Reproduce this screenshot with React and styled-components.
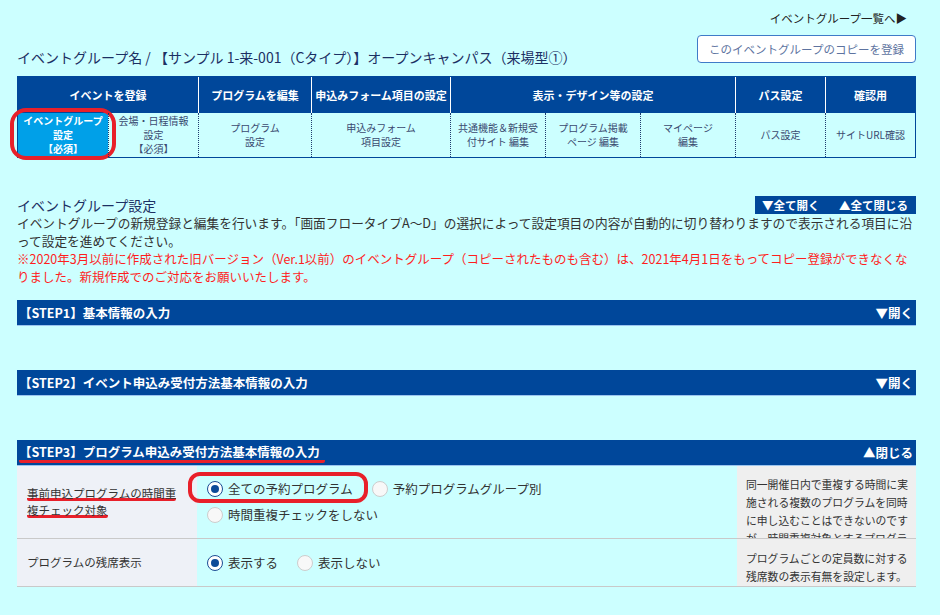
import styled, { createGlobalStyle } from 'styled-components';

const GlobalStyle = createGlobalStyle`
  body {
    margin: 0;
    background: #ccffff;
    font-family: "Noto Sans CJK JP", "Noto Sans", sans-serif;
    color: #333;
  }
`;

const Page = styled.div`
  width: 899px;
  padding: 10px 24px 30px 17px;
`;

const TopLink = styled.div`
  text-align: right;
  font-size: 11.5px;
  line-height: 16px;
  color: #222;
  padding-right: 9px;
`;

const TitleRow = styled.div`
  display: flex;
  justify-content: space-between;
  align-items: flex-end;
  margin: 9px 0 7px;
`;

const Title = styled.h1`
  margin: 0;
  font-size: 14px;
  font-weight: normal;
  line-height: 24px;
  color: #1c3064;
`;

const CopyButton = styled.button`
  width: 219px;
  height: 28px;
  margin-bottom: 6px;
  padding: 0;
  border: 1px solid #3f7bc8;
  border-radius: 4px;
  background: #fff;
  color: #5d73a0;
  font-family: inherit;
  font-size: 11.5px;
`;

const NavGrid = styled.div`
  display: grid;
  grid-template-columns: 90px 90px 113px 139px 95px 95px 95px 90px 90px;
  grid-template-rows: 36px 44px;
  border: 1px solid #00479a;
`;

const NavHead = styled.div`
  grid-column: span ${props => props.$span || 1};
  display: flex;
  align-items: center;
  justify-content: center;
  background: #00479a;
  color: #fff;
  font-size: 11px;
  font-weight: bold;
  border-left: ${props => (props.$first ? 'none' : '1px solid #fff')};
`;

const NavCell = styled.div`
  position: relative;
  display: flex;
  align-items: center;
  justify-content: center;
  text-align: center;
  font-size: 10px;
  line-height: 14px;
  color: ${props => (props.$active ? '#fff' : '#3a4a70')};
  font-weight: ${props => (props.$active ? 'bold' : 'normal')};
  background: ${props => (props.$active ? '#00a0e8' : 'transparent')};
  border-left: ${props => (props.$first ? 'none' : '1px dotted #1e3a6e')};
`;

const NavRing = styled.span`
  position: absolute;
  left: -8px;
  right: -8px;
  top: -5px;
  bottom: -3px;
  border: 4px solid #e8202a;
  border-radius: 16px;
  pointer-events: none;
`;

const SectionHead = styled.div`
  display: flex;
  justify-content: space-between;
  align-items: flex-end;
  margin-top: 38px;
`;

const SectionTitle = styled.h2`
  margin: 0;
  font-size: 14px;
  font-weight: normal;
  line-height: 18px;
  color: #1c3064;
`;

const ToggleAll = styled.div`
  display: flex;
  justify-content: space-between;
  width: 161px;
  box-sizing: border-box;
  height: 18px;
  padding: 0 8px 0 7px;
  background: #00479a;
  color: #fff;
  font-size: 11.5px;
  font-weight: bold;
  line-height: 18px;
  white-space: nowrap;
`;

const Desc = styled.p`
  margin: 0;
  font-size: ${props => (props.$alert ? 12.5 : 12.7)}px;
  line-height: 18px;
  color: ${props => (props.$alert ? '#ff1e1e' : '#333')};
`;

const Step = styled.section`
  margin-top: ${props => props.$gap}px;
`;

const StepBar = styled.div`
  display: flex;
  justify-content: space-between;
  align-items: center;
  height: 25px;
  padding: 0 3px 0 2px;
  background: #00479a;
  color: #fff;
  font-size: 12.5px;
  font-weight: bold;
  border-bottom: 1px solid #9cc4ee;
`;

const Marked = styled.span`
  padding: 0 ${props => props.$right || 0}px ${props => props.$below || 0}px 0;
  background: linear-gradient(#e8202a, #e8202a) no-repeat left bottom / 100% 3px;
  -webkit-box-decoration-break: clone;
  box-decoration-break: clone;
  border-radius: 2px;
`;

const FormRow = styled.div`
  display: grid;
  grid-template-columns: 180px 540px 179px;
  height: ${props => props.$h}px;
  border-bottom: 1px solid #c9c9c9;
`;

const LabelCell = styled.div`
  display: flex;
  align-items: center;
  padding: 0 15px 0 10px;
  background: #eef1f7;
  font-size: 11.5px;
  line-height: 17px;
  color: #333;
`;

const FieldCell = styled.div`
  display: flex;
  flex-direction: column;
  justify-content: center;
  padding-left: 10px;
`;

const HelpCell = styled.div`
  padding: ${props => props.$top || 9}px 8px 0 9px;
  background: #efefef;
  font-size: 10.8px;
  line-height: 18px;
  color: #333;
  overflow: hidden;
`;

const RadioLine = styled.div`
  display: flex;
  align-items: center;
  height: 26px;
`;

const RadioOption = styled.label`
  position: relative;
  display: inline-flex;
  align-items: center;
  gap: 5px;
  margin-right: 19px;
  font-size: 12.5px;
  line-height: 18px;
  color: #333;
`;

const RadioMark = styled.span`
  width: 16px;
  height: 16px;
  box-sizing: border-box;
  border-radius: 50%;
  border: 1px solid ${props => (props.$checked ? '#1b4d94' : '#cdcdcd')};
  background: ${props => (props.$checked ? '#fff' : '#f8f8f8')};
  display: flex;
  align-items: center;
  justify-content: center;
  &::after {
    content: '';
    width: 8px;
    height: 8px;
    border-radius: 50%;
    background: #0d4a98;
    display: ${props => (props.$checked ? 'block' : 'none')};
  }
`;

const OptionRing = styled.span`
  position: absolute;
  left: -19px;
  right: -15px;
  top: -8px;
  bottom: -5px;
  border: 4px solid #e8202a;
  border-radius: 12px;
  pointer-events: none;
`;

const navHeads = [
  { label: 'イベントを登録', span: 2 },
  { label: 'プログラムを編集' },
  { label: '申込みフォーム項目の設定' },
  { label: '表示・デザイン等の設定', span: 3 },
  { label: 'パス設定' },
  { label: '確認用' },
];

const navCells = [
  ['イベントグループ', '設定', '【必須】'],
  ['会場・日程情報', '設定', '【必須】'],
  ['プログラム', '設定'],
  ['申込みフォーム', '項目設定'],
  ['共通機能＆新規受', '付サイト 編集'],
  ['プログラム掲載', 'ページ 編集'],
  ['マイページ', '編集'],
  ['パス設定'],
  ['サイトURL確認'],
];

function Radio({ checked, children, ring }) {
  return (
    <RadioOption>
      <RadioMark $checked={checked} />
      {children}
      {ring && <OptionRing />}
    </RadioOption>
  );
}

export default function App() {
  return (
    <>
      <GlobalStyle />
      <Page>
        <TopLink>イベントグループ一覧へ▶</TopLink>
        <TitleRow>
          <Title>イベントグループ名 / 【サンプル 1-来-001（Cタイプ）】オープンキャンパス（来場型①）</Title>
          <CopyButton>このイベントグループのコピーを登録</CopyButton>
        </TitleRow>

        <NavGrid>
          {navHeads.map((h, i) => (
            <NavHead key={h.label} $span={h.span} $first={i === 0}>
              {h.label}
            </NavHead>
          ))}
          {navCells.map((lines, i) => (
            <NavCell key={i} $first={i === 0} $active={i === 0}>
              <div>
                {lines.map(l => (
                  <div key={l}>{l}</div>
                ))}
              </div>
              {i === 0 && <NavRing />}
            </NavCell>
          ))}
        </NavGrid>

        <SectionHead>
          <SectionTitle>イベントグループ設定</SectionTitle>
          <ToggleAll>
            <span>▼全て開く</span>
            <span>▲全て閉じる</span>
          </ToggleAll>
        </SectionHead>
        <Desc>
          イベントグループの新規登録と編集を行います。「画面フロータイプA～D」の選択によって設定項目の内容が自動的に切り替わりますので表示される項目に沿って設定を進めてください。
        </Desc>
        <Desc $alert>
          ※2020年3月以前に作成された旧バージョン（Ver.1以前）のイベントグループ（コピーされたものも含む）は、2021年4月1日をもってコピー登録ができなくなりました。新規作成でのご対応をお願いいたします。
        </Desc>

        <Step $gap={14}>
          <StepBar>
            <span>【STEP1】基本情報の入力</span>
            <span>▼開く</span>
          </StepBar>
        </Step>

        <Step $gap={44}>
          <StepBar>
            <span>【STEP2】イベント申込み受付方法基本情報の入力</span>
            <span>▼開く</span>
          </StepBar>
        </Step>

        <Step $gap={44}>
          <StepBar>
            <Marked $right={5} $below={2}>【STEP3】プログラム申込み受付方法基本情報の入力</Marked>
            <span>▲閉じる</span>
          </StepBar>
          <FormRow $h={72}>
            <LabelCell>
              <div>
                <Marked>事前申込プログラムの時間重複チェック対象</Marked>
              </div>
            </LabelCell>
            <FieldCell>
              <RadioLine>
                <Radio checked ring>全ての予約プログラム</Radio>
                <Radio>予約プログラムグループ別</Radio>
              </RadioLine>
              <RadioLine>
                <Radio>時間重複チェックをしない</Radio>
              </RadioLine>
            </FieldCell>
            <HelpCell>
              同一開催日内で重複する時間に実施される複数のプログラムを同時に申し込むことはできないのですが、時間重複対象とするプログラムを選択してください。
            </HelpCell>
          </FormRow>
          <FormRow $h={47}>
            <LabelCell>プログラムの残席表示</LabelCell>
            <FieldCell>
              <RadioLine>
                <Radio checked>表示する</Radio>
                <Radio>表示しない</Radio>
              </RadioLine>
            </FieldCell>
            <HelpCell $top={10}>
              プログラムごとの定員数に対する残席数の表示有無を設定します。
            </HelpCell>
          </FormRow>
        </Step>
      </Page>
    </>
  );
}
